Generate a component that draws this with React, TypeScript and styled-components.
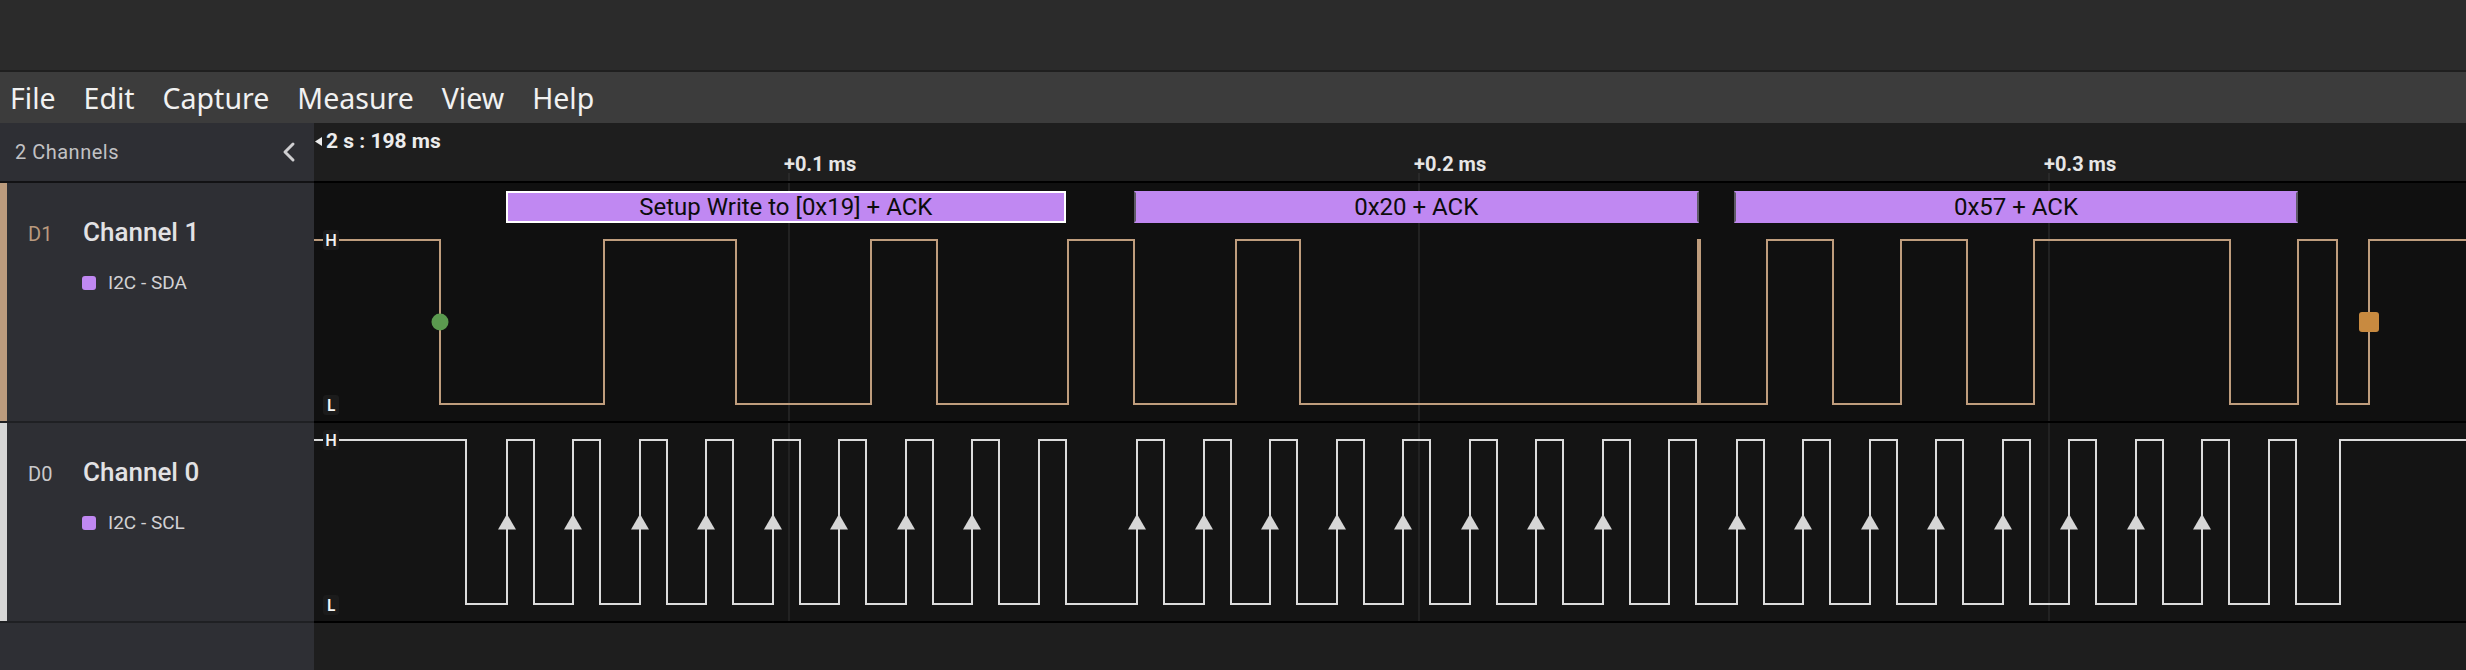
import React from 'react';
import styled, { createGlobalStyle } from 'styled-components';

const GlobalStyle = createGlobalStyle`
  html, body { margin: 0; padding: 0; background: #1e1e1e; }
  body { font-family: Roboto, "Noto Sans", sans-serif; overflow: hidden; }
  * { box-sizing: border-box; }
`;

const SIDEBAR_W = 314;
const PAGE_W = 2466;
const PANE_W = PAGE_W - SIDEBAR_W;
const lx = (pageX: number) => Math.round(pageX - SIDEBAR_W);

const SDA_COLOR = '#bf9d7d';
const SCL_COLOR = '#dcdcdc';
const DECODE_COLOR = '#c088f2';

/* ---------- data ---------- */
const sdaEdges = [
  440, 604, 736, 870.5, 936.5, 1067.6, 1134.3, 1235.7, 1300.2, 1698, 1700.3,
  1767.3, 1833.3, 1901.3, 1966.7, 2034.3, 2230.3, 2297.7, 2337.3, 2369.3,
];

const byteStarts = [506.5, 1137.4, 1736.5];
const PERIOD = 66.5;
const HIGH_W = 27;
const sclEdges: number[] = [466];
const sclArrows: number[] = [];
byteStarts.forEach((s) => {
  for (let k = 0; k < 9; k++) {
    const r = s + k * PERIOD;
    sclEdges.push(r, r + HIGH_W);
    if (k < 8) sclArrows.push(r);
  }
});
sclEdges.push(2340.3);

const decodes = [
  { from: 505.6, to: 1066, label: 'Setup Write to [0x19] + ACK', selected: true },
  { from: 1134, to: 1698.5, label: '0x20 + ACK', selected: false },
  { from: 1734, to: 2298, label: '0x57 + ACK', selected: false },
];

const ticks = [
  { x: 789, label: '+0.1 ms' },
  { x: 1419, label: '+0.2 ms' },
  { x: 2049, label: '+0.3 ms' },
];

function digitalPath(edges: number[], hiY: number, loY: number, startHigh: boolean) {
  let high = startHigh;
  let d = `M0 ${high ? hiY : loY}`;
  edges.forEach((e) => {
    const x = lx(e);
    d += ` H${x} V${high ? loY : hiY}`;
    high = !high;
  });
  d += ` H${PANE_W}`;
  return d;
}

/* ---------- chrome ---------- */
const Shell = styled.div`
  width: ${PAGE_W}px;
  height: 670px;
  display: flex;
  flex-direction: column;
  background: #1e1e1e;
`;

const TitleBar = styled.div`
  height: 72px;
  flex-shrink: 0;
  background: #2b2b2b;
  border-bottom: 2px solid #1f1f1f;
`;

const MenuBar = styled.nav`
  height: 51px;
  flex-shrink: 0;
  display: flex;
  align-items: center;
  gap: 28px;
  padding-left: 10px;
  background: #3c3c3c;
`;

const MenuItem = styled.span`
  font-family: "Noto Sans", sans-serif;
  font-size: 28.5px;
  line-height: 28px;
  color: #f1f1f1;
`;

const Main = styled.div`
  flex: 1;
  display: flex;
  min-height: 0;
`;

/* ---------- sidebar ---------- */
const Sidebar = styled.aside`
  width: ${SIDEBAR_W}px;
  flex-shrink: 0;
  display: flex;
  flex-direction: column;
  background: #2e2f34;
`;

const SidebarHeader = styled.div`
  height: 60px;
  flex-shrink: 0;
  display: flex;
  align-items: center;
  justify-content: space-between;
  padding: 0 17px 0 15px;
  border-bottom: 2px solid #121214;
`;

const HeaderTitle = styled.span`
  font-size: 20px;
  line-height: 20px;
  letter-spacing: 0.5px;
  color: #c2c2c4;
`;

const CollapseIcon = styled.svg`
  display: block;
`;

const ChannelRow = styled.div<{ $h: number }>`
  height: ${(p) => p.$h}px;
  flex-shrink: 0;
  display: flex;
  border-bottom: 2px solid #1f2023;
`;

const AccentBar = styled.div<{ $color: string }>`
  width: 7px;
  flex-shrink: 0;
  background: ${(p) => p.$color};
`;

const RowBody = styled.div`
  flex: 1;
  display: flex;
  flex-direction: column;
  padding: 36px 0 0 21px;
`;

const TitleLine = styled.div`
  display: flex;
  align-items: baseline;
`;

const ChannelTag = styled.span<{ $color: string }>`
  width: 55px;
  font-size: 20px;
  line-height: 20px;
  color: ${(p) => p.$color};
`;

const ChannelName = styled.span`
  font-size: 26px;
  line-height: 26px;
  font-weight: 500;
  color: #e2e2e4;
`;

const AnalyzerLine = styled.div`
  display: flex;
  align-items: center;
  gap: 12px;
  margin: 28px 0 0 54px;
`;

const AnalyzerSwatch = styled.span`
  width: 14px;
  height: 14px;
  border-radius: 3px;
  background: ${DECODE_COLOR};
`;

const AnalyzerName = styled.span`
  font-size: 19px;
  line-height: 19px;
  color: #d2d2d4;
`;

const SidebarFill = styled.div`
  flex: 1;
`;

/* ---------- wave pane ---------- */
const WavePane = styled.section`
  flex: 1;
  display: flex;
  flex-direction: column;
  background: #1e1e1e;
  min-width: 0;
`;

const TimeHeader = styled.div`
  position: relative;
  height: 60px;
  flex-shrink: 0;
  background: #1e1e1e;
  border-bottom: 2px solid #000;
  padding: 8px 0 0 1px;
`;

const CursorTime = styled.div`
  display: flex;
  align-items: center;
  gap: 4px;
  font-size: 21px;
  line-height: 21px;
  font-weight: 700;
  color: #ececec;
`;

const TickLabel = styled.span`
  position: absolute;
  top: 31px;
  font-size: 20px;
  line-height: 20px;
  font-weight: 700;
  color: #e6e6e6;
  white-space: nowrap;
`;

const TickMark = styled.span`
  position: absolute;
  top: 50px;
  width: 2px;
  height: 8px;
  background: #2a2a2a;
`;

const Lane = styled.div<{ $h: number; $bg: string }>`
  position: relative;
  height: ${(p) => p.$h}px;
  flex-shrink: 0;
  background: ${(p) => p.$bg};
  border-bottom: 2px solid #000;
`;

const WaveSvg = styled.svg`
  display: block;
`;

const LevelChip = styled.span`
  position: absolute;
  left: 9px;
  width: 16px;
  height: 20px;
  display: flex;
  align-items: center;
  justify-content: center;
  border-radius: 3px;
  background: #1b1b1b;
  font-family: "Noto Sans", sans-serif;
  font-size: 16px;
  line-height: 16px;
  font-weight: 600;
  color: #f4f4f4;
`;

const DecodeBubble = styled.div<{ $selected: boolean }>`
  position: absolute;
  top: 8px;
  height: 32px;
  display: flex;
  align-items: center;
  justify-content: center;
  background: ${DECODE_COLOR};
  border: 2px solid ${(p) => (p.$selected ? '#ffffff' : 'transparent')};
  border-left-color: ${(p) => (p.$selected ? '#ffffff' : '#5e5a66')};
  border-right-color: ${(p) => (p.$selected ? '#ffffff' : '#5e5a66')};
  font-size: 24px;
  line-height: 24px;
  color: #0c0c0c;
  white-space: nowrap;
`;

const PaneFill = styled.div`
  flex: 1;
  background: #1e1e1e;
`;

/* ---------- components ---------- */
const GridLines: React.FC<{ h: number }> = ({ h }) => (
  <>
    {ticks.map((t) => (
      <line key={t.x} x1={lx(t.x)} x2={lx(t.x)} y1={0} y2={h} stroke="#222222" strokeWidth={2} />
    ))}
  </>
);

const SdaLane: React.FC = () => {
  const H = 238;
  const hi = 57;
  const lo = 221;
  const mid = 139;
  return (
    <Lane $h={240} $bg="#101010">
      <WaveSvg width={PANE_W} height={H}>
        <GridLines h={H} />
        <path d={digitalPath(sdaEdges, hi, lo, true)} fill="none" stroke={SDA_COLOR} strokeWidth={2} />
        <circle cx={lx(440)} cy={mid} r={8.5} fill="#5b9a4f" />
        <rect x={lx(2369.3) - 10} y={mid - 10} width={20} height={20} rx={3} fill="#c88a40" />
      </WaveSvg>
      {decodes.map((d) => (
        <DecodeBubble
          key={d.label}
          $selected={d.selected}
          style={{ left: d.from - SIDEBAR_W, width: d.to - d.from }}
        >
          {d.label}
        </DecodeBubble>
      ))}
      <LevelChip style={{ top: hi - 10 }}>H</LevelChip>
      <LevelChip style={{ top: lo - 9 }}>L</LevelChip>
    </Lane>
  );
};

const SclLane: React.FC = () => {
  const H = 198;
  const hi = 17;
  const lo = 181;
  return (
    <Lane $h={200} $bg="#141414">
      <WaveSvg width={PANE_W} height={H}>
        <GridLines h={H} />
        <path d={digitalPath(sclEdges, hi, lo, true)} fill="none" stroke={SCL_COLOR} strokeWidth={2} />
        {sclArrows.map((a) => {
          const x = lx(a);
          return <polygon key={a} points={`${x},91 ${x - 9},106.5 ${x + 9},106.5`} fill="#d6d6d6" />;
        })}
      </WaveSvg>
      <LevelChip style={{ top: hi - 10 }}>H</LevelChip>
      <LevelChip style={{ top: lo - 9 }}>L</LevelChip>
    </Lane>
  );
};

const channels = [
  { tag: 'D1', name: 'Channel 1', analyzer: 'I2C - SDA', color: '#bb9b7d', tagColor: '#b99a7e', h: 240 },
  { tag: 'D0', name: 'Channel 0', analyzer: 'I2C - SCL', color: '#d6d6d6', tagColor: '#c9c9cb', h: 200 },
];

export default function App() {
  return (
    <>
      <GlobalStyle />
      <Shell>
        <TitleBar />
        <MenuBar>
          {['File', 'Edit', 'Capture', 'Measure', 'View', 'Help'].map((m) => (
            <MenuItem key={m}>{m}</MenuItem>
          ))}
        </MenuBar>
        <Main>
          <Sidebar>
            <SidebarHeader>
              <HeaderTitle>2 Channels</HeaderTitle>
              <CollapseIcon width={16} height={22} viewBox="0 0 16 22">
                <polyline points="12,3 4,11 12,19" fill="none" stroke="#cfcfd1" strokeWidth={3} strokeLinecap="round" strokeLinejoin="round" />
              </CollapseIcon>
            </SidebarHeader>
            {channels.map((c) => (
              <ChannelRow key={c.tag} $h={c.h}>
                <AccentBar $color={c.color} />
                <RowBody>
                  <TitleLine>
                    <ChannelTag $color={c.tagColor}>{c.tag}</ChannelTag>
                    <ChannelName>{c.name}</ChannelName>
                  </TitleLine>
                  <AnalyzerLine>
                    <AnalyzerSwatch />
                    <AnalyzerName>{c.analyzer}</AnalyzerName>
                  </AnalyzerLine>
                </RowBody>
              </ChannelRow>
            ))}
            <SidebarFill />
          </Sidebar>
          <WavePane>
            <TimeHeader>
              <CursorTime>
                <svg width={7} height={9} viewBox="0 0 7 9">
                  <polygon points="7,0 0,4.5 7,9" fill="#ececec" />
                </svg>
                <span>2 s : 198 ms</span>
              </CursorTime>
              {ticks.map((t) => (
                <React.Fragment key={t.x}>
                  <TickLabel style={{ left: lx(t.x) - 5 }}>{t.label}</TickLabel>
                  <TickMark style={{ left: lx(t.x) - 1 }} />
                </React.Fragment>
              ))}
            </TimeHeader>
            <SdaLane />
            <SclLane />
            <PaneFill />
          </WavePane>
        </Main>
      </Shell>
    </>
  );
}
